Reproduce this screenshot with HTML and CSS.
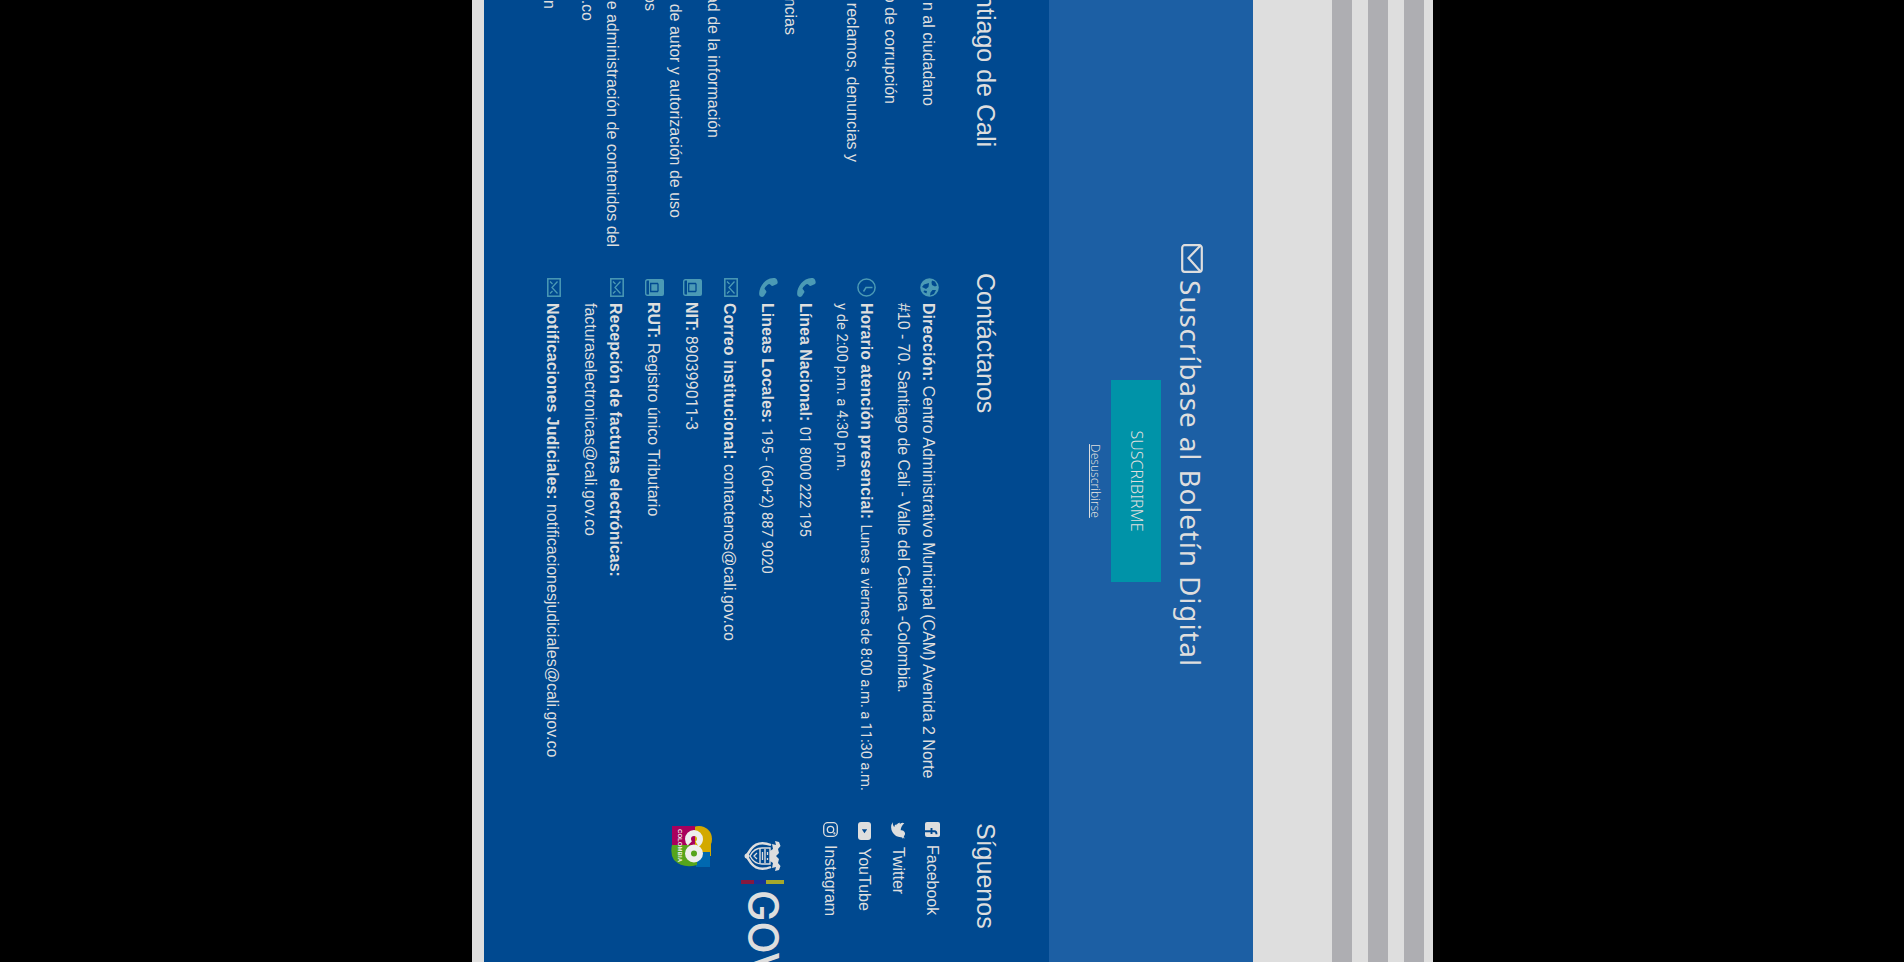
FILE: index.html
```html
<!DOCTYPE html>
<html lang="es">
<head>
<meta charset="utf-8">
<title>Alcaldía de Santiago de Cali</title>
<link rel="stylesheet" href="styles.css">
</head>
<body>
<svg class="defs" width="0" height="0">
  <symbol id="mail" viewBox="0 0 19 14"><rect x=".8" y=".8" width="17.4" height="12.4" fill="none" stroke="currentColor" stroke-width="1.5"/><path d="M3.500 3.500 9.500 9l6-5.500M3.500 11l2.500-2.500M15.500 11 13 8.500" fill="none" stroke="currentColor" stroke-width="1.300"/></symbol>
  <symbol id="phone" viewBox="0 0 19 19"><path d="M1 1.500C3 0 5 0 6 1l2 4.500c0 1.500-2 2-2 3.500 1 2 2.500 3.500 4.500 4.500 1 0 2-2 3.500-2l4 2.500c1.500 1.500 1 3.500-.5 4.500C12 20.500 0 14 0 4.500c0-1.500.3-2.300 1-3z" fill="currentColor"/></symbol>
  <symbol id="globe" viewBox="0 0 19 19"><circle cx="9.500" cy="9.500" r="9.300" fill="currentColor"/><path d="M3.500 4l4-2 1 2-1.500 3-2.500.5-2-.5zM12 3l4 2 1.500 4-3-.5-2.500-2zM5 10l4 .5 2 2.500-2 4-2.500-2zM13 12l2.500.5-1.500 3-1.500-.5z" fill="#004990"/></symbol>
  <symbol id="clock" viewBox="0 0 19 19"><circle cx="9.500" cy="9.500" r="8.600" fill="none" stroke="currentColor" stroke-width="1.500"/><path d="M9.500 3.500v6.500l4 2.500" fill="none" stroke="currentColor" stroke-width="1.500"/></symbol>
  <symbol id="card" viewBox="0 0 17 19"><path d="M2 0h13a2 2 0 0 1 2 2v13H0V2a2 2 0 0 1 2-2z" fill="currentColor"/><path d="M.7 14v2.500q0 1.800 2 1.800h11.600q2 0 2-1.800V14" fill="none" stroke="currentColor" stroke-width="1.400"/><path d="M4.500 6h8M4.500 6v7.300h8V6" fill="none" stroke="#004990" stroke-width="1.300"/></symbol>
</svg>
<div class="page">
  <div class="stripes"><i></i><i></i><i></i></div>
  <section class="news">
    <h2><svg class="env" viewBox="0 0 29 22"><rect x="1.200" y="1.200" width="26.600" height="19.600" rx="2.500" fill="none" stroke="currentColor" stroke-width="2.200"/><path d="M1.500 2.500 14 14.500 27.500 2.500" fill="none" stroke="currentColor" stroke-width="2.200"/></svg><span>Suscríbase al Boletín Digital</span></h2>
    <button><span>SUSCRIBIRME</span></button>
    <a class="unsub"><span>Desuscribirse</span></a>
  </section>
  <footer>
    <div class="col about">
      <h3><span>ntiago de Cali</span></h3>
      <ul>
        <li style="width:106px"><span>n al ciudadano</span></li>
        <li style="width:104px"><span>o de corrupción</span></li>
        <li class="two" style="width:162px"><span>reclamos, denuncias y</span></li>
        <li class="skip" style="width:35px"><span>ncias</span></li>
        <li style="width:138px"><span>ad de la información</span></li>
        <li style="width:218px"><span>de autor y autorización de uso</span></li>
        <li class="cont" style="width:11px"><span>os</span></li>
        <li style="width:247px"><span>e administración de contenidos del</span></li>
        <li class="cont" style="width:21px"><span>.co</span></li>
        <li style="width:9px"><span>n</span></li>
      </ul>
    </div>
    <div class="col contact">
      <h3><span>Contáctanos</span></h3>
      <ul>
        <li><svg class="ic sq"><use href="#globe"/></svg><p><b>Dirección:</b> <span>Centro Administrativo Municipal (CAM) Avenida 2 Norte</span><br><span class="addr">#10 - 70. Santiago de Cali - Valle del Cauca -Colombia.</span></p></li>
        <li class="tight"><svg class="ic sq"><use href="#clock"/></svg><p><b>Horario atención presencial:</b> <span class="alt hours">Lunes a viernes de 8:00 a.m. a 11:30 a.m.</span><br><span class="alt">y de 2:00 p.m. a 4:30 p.m.</span></p></li>
        <li><svg class="ic sq"><use href="#phone"/></svg><p><b>Línea Nacional:</b> <span class="alt num">01 8000 222 195</span></p></li>
        <li><svg class="ic sq"><use href="#phone"/></svg><p><b>Lineas Locales:</b> <span class="alt">195 - (60+2) 887 9020</span></p></li>
        <li><svg class="ic en"><use href="#mail"/></svg><p><b>Correo institucional:</b> <span>contactenos@cali.gov.co</span></p></li>
        <li><svg class="ic cd"><use href="#card"/></svg><p class="near"><b>NIT:</b> <span class="nit">890399011-3</span></p></li>
        <li><svg class="ic cd"><use href="#card"/></svg><p class="near"><b>RUT:</b> <span>Registro único Tributario</span></p></li>
        <li><svg class="ic en"><use href="#mail"/></svg><p><b>Recepción de facturas electrónicas:</b><br><span>facturaselectronicas@cali.gov.co</span></p></li>
        <li><svg class="ic en"><use href="#mail"/></svg><p><b>Notificaciones Judiciales:</b> <span>notificacionesjudiciales@cali.gov.co</span></p></li>
      </ul>
    </div>
    <div class="col social">
      <h3><span>Síguenos</span></h3>
      <ul>
        <li><svg width="15" height="15" viewBox="0 0 15 15"><rect width="15" height="15" rx="2" fill="currentColor"/><path d="M9.300 15V5.500q0-2 3-2M6 8.500h6" fill="none" stroke="#004990" stroke-width="1.900"/></svg><span>Facebook</span></li>
        <li><svg width="17" height="14" viewBox="0 0 24 20"><path d="M24 2.400a10 10 0 0 1-2.800.8A5 5 0 0 0 23.300.5a10 10 0 0 1-3.100 1.200 4.900 4.900 0 0 0-8.400 4.500A14 14 0 0 1 1.700 1a4.900 4.900 0 0 0 1.500 6.600A5 5 0 0 1 1 7a4.900 4.900 0 0 0 3.900 4.900 5 5 0 0 1-2.200.1 4.900 4.900 0 0 0 4.600 3.400A10 10 0 0 1 0 17.500 14 14 0 0 0 21.500 5z" fill="currentColor"/></svg><span>Twitter</span></li>
        <li><svg width="18" height="13" viewBox="0 0 18 13"><rect width="18" height="13" rx="3" fill="currentColor"/><path d="M7.300 3.800v5.400l4-2.700z" fill="#004990"/></svg><span>YouTube</span></li>
        <li><svg width="15" height="15" viewBox="0 0 15 15" fill="none" stroke="currentColor" stroke-width="1.300"><rect x=".7" y=".7" width="13.600" height="13.600" rx="4"/><circle cx="7.500" cy="7.500" r="3.200"/><circle cx="11.400" cy="3.600" r=".4"/></svg><span>Instagram</span></li>
      </ul>
      <div class="gov">
        <svg width="32" height="38" viewBox="0 0 32 38" fill="none" stroke="#dedede"><path d="M16 6 13 3 9 4 6 1.500 2 3 1 7 5 6 4 10l5-1 2 3h10l2-3 5 1-1-4 4 1-1-4-4-1.500L23 4l-4-1zM14 1h4" fill="#dedede" stroke="none"/><path d="M8 12h16v8q0 8-8 12Q8 28 8 20zM9 17h14M9 22h14" stroke-width="1.400"/><path d="M5 11Q0 24 9 31l6 4M27 11q5 13-4 20l-6 4" stroke-width="2.400"/><path d="M12 14.500h3M18 14.500h2M12 19.500h8M13 25l3 3 3-3" stroke-width="1.300"/><circle cx="16" cy="35" r="2.500" fill="#dedede" stroke="none"/></svg>
        <i class="flag"></i><span>GOV</span>
      </div>
      <svg class="co" width="42" height="41" viewBox="0 0 42 41"><path d="M12 1h19v16H8V5z" fill="#d3a900"/><circle cx="14" cy="13" r="13" fill="#d3a900"/><path d="M27 2h15v14H27z" fill="#0068b0"/><path d="M1 17h20v23H1z" fill="#a8005c"/><path d="M20 15h20q4 14-5 23-6 4-15 2z" fill="#56a51c"/><circle cx="14" cy="18" r="6" fill="none" stroke="#eee" stroke-width="6" stroke-dasharray="29 9" stroke-dashoffset="-4.500"/><circle cx="28.500" cy="18" r="6" fill="none" stroke="#eee" stroke-width="6"/><text x="4" y="34" class="mini" textLength="33">COLOMBIA</text></svg>
    </div>
  </footer>
</div>
</body>
</html>
```
FILE: styles.css
```css
* { box-sizing: border-box; }
body { margin: 0; height: 962px; overflow: hidden; background: #000; font-family: "Liberation Sans", Arial, sans-serif; color: #dedede; }
.defs { position: absolute; }
h2, h3, p, ul { margin: 0; padding: 0; font-weight: 400; }
ul { list-style: none; }
.page { width: 962px; height: 961px; margin-left: 1433px; background: #dedede; overflow: hidden; transform-origin: 0 0; transform: rotate(90deg); }
.stripes { height: 180px; padding-top: 9px; display: flex; flex-direction: column; gap: 16px; }
.stripes i { height: 20px; background: #aeaeb2; }
.news { height: 204px; background: #1c5fa4; display: flex; flex-direction: column; align-items: center; }
.news h2 { align-self: flex-start; margin: 37px 0 5px 244px; height: 50px; display: flex; align-items: center; gap: 7px; font: 400 28px/50px "Noto Sans", sans-serif; letter-spacing: .82px; white-space: nowrap; }
.env { width: 29px; height: 22px; margin-top: -3px; }
.news button { width: 202px; height: 50px; border: 0; padding: 0 0 3px; background: #0093a8; color: #dedede; font: 300 16px "Noto Sans", sans-serif; }
.unsub { margin-top: 4px; font: 300 12px/24px "Noto Sans", sans-serif; text-decoration: underline; }
footer { height: 565px; background: #004990; display: grid; grid-template-columns: 272px 550px 140px; }
.col { white-space: nowrap; font-size: 16px; line-height: 25px; }
h3 { font-size: 25px; line-height: 30px; margin: 48px 0 30px; }
.contact h3, .social h3 { padding-left: 1px; }
.about h3 { width: 147px; display: flex; justify-content: flex-end; }
.about li { display: flex; justify-content: flex-end; margin-bottom: 13px; }
.about li.two { margin-bottom: 37px; }
.about li.skip { margin-bottom: 52px; }
.about li.cont { margin-top: -13px; }
.contact li { display: flex; margin: 0 0 13px 6px; }
.contact li.tight p { line-height: 24px; }
.contact li.tight { height: 47px; }
.contact p { padding-left: 6px; }
.contact p.near { padding-left: 5px; }
.alt { font-family: Roboto, sans-serif; font-size: 14.9px; line-height: 1; letter-spacing: -.05px; margin-left: 1px; }
.hours { letter-spacing: -.17px; }
br + .alt { margin-left: 0; }
.num { letter-spacing: -.1px; }
.nit { font-family: Roboto, sans-serif; line-height: 1; }
.addr { letter-spacing: -.04px; }
.ic { color: #4b9ab5; flex: none; width: 19px; height: 19px; margin-top: 2px; }
.ic.en { height: 14px; margin-top: 4px; }
.ic.cd { height: 19px; margin-top: 2px; }
.social h3 { margin-bottom: 26px; }
.social li { display: flex; align-items: center; height: 25px; margin-bottom: 9px; gap: 8px; }
.gov { margin: 34px 0 0 18px; height: 42px; display: flex; align-items: center; font: 500 42px/42px Inter, sans-serif; }
.gov > * { flex: none; }
.flag { width: 4px; height: 43px; margin: 0 6px 0 8px; background: linear-gradient(#a5a82c 42%, #12349b 42% 70%, #85193f 70%); }
.co { display: block; margin: 30px 0 0 3px; }
.mini { font: 700 6px "Liberation Sans", sans-serif; fill: #eee; }
```
